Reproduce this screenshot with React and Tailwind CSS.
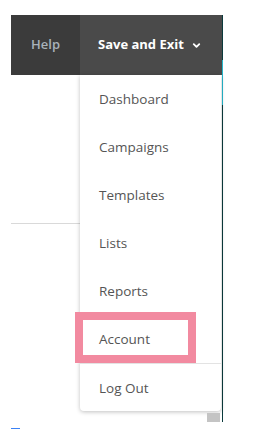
import { ChevronDown } from "lucide-react";

const items = ["Dashboard", "Campaigns", "Templates", "Lists", "Reports", "Account", "Log Out"];

const App = () => {
    return (
        <div className="relative w-[259px] h-[429px] overflow-hidden bg-white pt-[15px] pl-[11px] font-['Open_Sans',sans-serif]">
            <div className="flex">
                <div className="w-[211px]">
                    <div className="flex h-[60px]">
                        <div className="w-[69px] bg-[#3b3b3b] flex items-center justify-center text-[13px] font-semibold text-[#a9b2ba]">
                            Help
                        </div>
                        <div className="flex-1 bg-[#4a4a4a] flex items-center pl-[18px] gap-[5px] text-[13px] font-bold text-white">
                            Save and Exit
                            <ChevronDown size={11} strokeWidth={4} className="ml-[2px]" />
                        </div>
                    </div>
                    <div className="h-[148px]" />
                    <div className="w-[69px] h-px bg-[#d9d9d9]" />
                </div>
                <div className="w-px h-[407px] flex flex-col">
                    <div className="h-[45px] bg-[#0b3b3d]" />
                    <div className="h-[45px] bg-[#26b7cc]" />
                    <div className="flex-1 bg-[#0b3b3d]" />
                </div>
            </div>

            {/* dropdown */}
            <div className="absolute left-[80px] top-[75px] w-[141px] bg-white rounded-b-[4px] shadow-[0_1px_4px_rgba(0,0,0,0.25)]">
                {items.map((item, i) => (
                    <div
                        key={item}
                        className={`h-[48px] flex items-center pl-[19px] pt-[1px] text-[13.5px] text-[#555] ${i === 6 ? "border-t border-[#e3e3e3]" : ""}`}
                    >
                        {item}
                    </div>
                ))}
            </div>

            <div className="absolute left-[75px] top-[312px] w-[121px] h-[51px] border-[8px] border-[#f28aa0]" />
            <div className="absolute left-[207px] top-[413px] w-[13px] h-[9px] bg-[#c4c4c4]" />
            <div className="absolute left-[11px] top-[428px] w-[9px] h-px bg-[#3b82f6]" />
        </div>
    )
}

export default App;
